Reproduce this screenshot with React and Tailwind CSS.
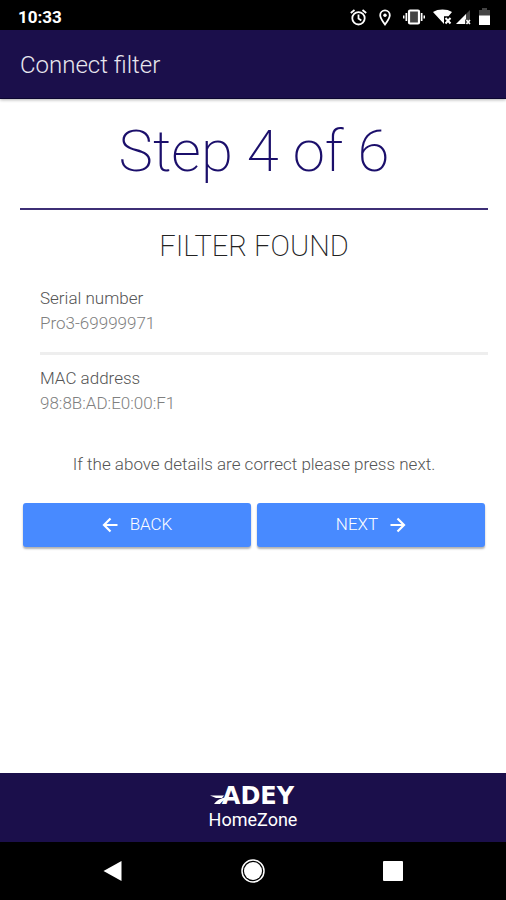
import React from "react";

const details = [
  { label: "Serial number", value: "Pro3-69999971" },
  { label: "MAC address", value: "98:8B:AD:E0:00:F1" },
];

const StatusBar = () => (
  <div className="flex h-[30px] items-center justify-between bg-black pt-1 pr-4 pl-[18px] text-white">
    <span className="text-[17px] leading-6 font-bold">10:33</span>
    <div className="flex items-center gap-1">
      {/* alarm */}
      <svg className="size-[17px]" viewBox="0 0 17 17" fill="none" stroke="currentColor" strokeWidth="1.800">
        <circle cx="8.500" cy="9.300" r="6.200" />
        <path d="M8.500 5.500v4l2.800 2M.8 4L4.500 1M16.200 4l-3.700-3" />
      </svg>
      {/* location */}
      <svg className="mx-2 h-[17px] w-3" viewBox="0 0 12 17" fill="none" stroke="currentColor" strokeWidth="1.800">
        <path d="M6 15.500C3 11.500 1.200 9 1.200 6.200a4.800 4.800 0 0 1 9.600 0C10.800 9 9 11.500 6 15.500z" />
        <circle cx="6" cy="6.200" r="1.700" fill="currentColor" stroke="none" />
      </svg>
      {/* vibrate */}
      <svg className="h-4 w-[22px]" viewBox="0 0 22 16" fill="currentColor">
        <rect x="6" y="1.5" width="10" height="13" rx="1" fill="#444" stroke="currentColor" strokeWidth="2.200" />
        <path d="M2.500 4h1.700v8H2.500zM17.800 4h1.700v8h-1.700zM0 6.500h1.500v3H0zM20.500 6.500H22v3h-1.500z" />
      </svg>
      <div className="ml-1 flex items-center gap-[2px]">
        <svg className="h-4 w-5" viewBox="0 0 20 16" fill="currentColor">
          <path d="M0 3C5-.3 14-.3 19 3l-3.500 4.200H11V15z" />
          <path d="M12.500 9l5 5.500M17.500 9l-5 5.500" stroke="currentColor" strokeWidth="2" />
        </svg>
        <svg className="size-4" viewBox="0 0 16 16" fill="currentColor">
          <path d="M15 1v14H1z" fill="#444" />
          <path d="M11 5v5l-1 1v4H1z" />
          <path d="M11.500 11l3.500 4M15 11l-3.500 4" stroke="currentColor" strokeWidth="1.500" />
        </svg>
      </div>
      <svg className="ml-1 h-[18px] w-[11px]" viewBox="0 0 11 18" fill="currentColor">
        <path d="M3 0h5v2h3v6H0V2h3z" fill="#444" />
        <path d="M0 7.500h11V17H0z" />
      </svg>
    </div>
  </div>
);

const AdeyLogo = () => (
  <div className="flex items-center justify-center pr-[2px]">
    <svg className="-mr-2 h-[18px] w-5" viewBox="0 0 20 18" fill="#fff" aria-hidden="true">
      <path d="M0 8.500h14l-2 2.500H6z" />
      <path d="M4 17c4-5 9-7 16-7-5 2-8 4-10 7z" />
    </svg>
    <span className="font-['DejaVu_Sans',sans-serif] text-2xl leading-6 font-bold">ADEY</span>
  </div>
);

const Arrow = ({ d }) => (
  <svg className="h-5 w-4" viewBox="0 0 16 20" fill="none" stroke="currentColor" strokeWidth="2.200">
    <path d={d} />
  </svg>
);

const DetailRow = ({ label, value }) => (
  <div className="border-b-[3px] border-[#eee] pt-[11px] pb-4 text-[17px] leading-[25px] last:border-0">
    <dt className="text-[#555]">{label}</dt>
    <dd className="text-[#808080]">{value}</dd>
  </div>
);

const buttonStyle =
  "flex h-11 flex-1 items-center justify-center gap-3 rounded-[3px] bg-[#488aff] text-[17px] text-white shadow-[0_2px_2px_rgba(0,0,0,0.3)]";

const App = () => (
  <div className="flex min-h-screen flex-col bg-white font-['Roboto',sans-serif] font-light">
    <StatusBar />
    <header className="flex h-[69px] items-center border-b border-[#0c0630] bg-[#1b0f4b] px-5 pt-px shadow-[0_1px_3px_rgba(0,0,0,0.3)]">
      <h1 className="text-2xl text-[#e8e6ee]">Connect filter</h1>
    </header>

    <main className="flex-1 pr-[18px] pl-5">
      <h2 className="border-b-2 border-[#3d2f76] pt-4 pb-[21px] text-center text-[58px] leading-[72px] font-extralight text-[#1b0f6b]">
        Step 4 of 6
      </h2>
      <h3 className="pt-5 text-center text-[29px] leading-8 font-extralight text-[#222]">FILTER FOUND</h3>

      <dl className="mt-[13px] pl-5">
        {details.map((d) => (
          <DetailRow key={d.label} label={d.label} value={d.value} />
        ))}
      </dl>

      <p className="mt-5 text-center text-[17px] leading-6 text-[#555]">
        If the above details are correct please press next.
      </p>

      <div className="mt-[27px] flex gap-[6px] px-[3px]">
        <button type="button" className={buttonStyle}>
          <Arrow d="M15.500 10H2.500M8.500 3.500L2 10l6.500 6.500" />
          BACK
        </button>
        <button type="button" className={buttonStyle}>
          NEXT
          <Arrow d="M.5 10h13M7.500 3.500L14 10l-6.500 6.500" />
        </button>
      </div>
    </main>

    <footer className="flex h-[69px] flex-col items-center bg-[#1b0f4b] pt-[11px] text-white">
      <AdeyLogo />
      <span className="text-lg leading-6 font-normal">HomeZone</span>
    </footer>

    <nav className="flex h-[58px] items-center justify-center gap-[118px] bg-black text-white">
      <button type="button" aria-label="Back">
        <svg className="h-[22px] w-5" viewBox="0 0 20 22" fill="currentColor">
          <path d="M18.500 1v20L.5 11z" />
        </svg>
      </button>
      <button type="button" aria-label="Home">
        <svg className="size-6" viewBox="0 0 24 24">
          <circle cx="12" cy="12" r="11" fill="none" stroke="currentColor" strokeWidth="1.500" />
          <circle cx="12" cy="12" r="9" fill="currentColor" />
        </svg>
      </button>
      <button type="button" aria-label="Recent apps">
        <span className="block size-5 rounded-[1px] bg-white" />
      </button>
    </nav>
  </div>
);

export default App;
